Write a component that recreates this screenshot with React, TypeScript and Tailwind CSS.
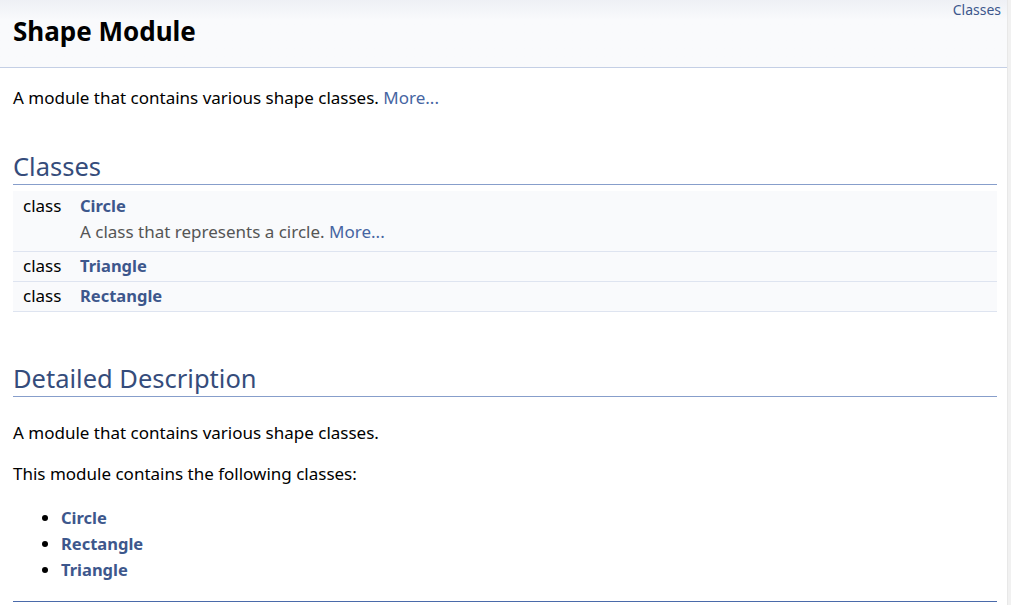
const font = { fontFamily: '"Noto Sans", "Open Sans", sans-serif' };

const members = [
  { name: 'Circle', brief: 'A class that represents a circle.' },
  { name: 'Triangle' },
  { name: 'Rectangle' },
];

const listed = ['Circle', 'Rectangle', 'Triangle'];

export default function App() {
  return (
    <div className="flex h-[605px] w-[1011px] overflow-hidden bg-white text-black" style={font}>
      <div className="flex min-w-0 flex-1 flex-col">
        {/* Title bar */}
        <div className="flex items-start justify-between border-b border-[#c4cfe5] bg-gradient-to-b from-[#eef0f5] to-[#f9fafc] to-[30%] pl-[13px] pr-[6px]">
          <h1 className="pb-[20px] pt-[15px] text-[26px] font-bold leading-[32px]">Shape Module</h1>
          <a className="pt-[1px] text-[14px] leading-[18px] text-[#3d578c]">Classes</a>
        </div>

        <div className="flex flex-col px-[13px] pr-[10px]">
          <p className="mt-[18px] text-[17px] leading-[24px]">
            A module that contains various shape classes. <a className="text-[#4665a2]">More...</a>
          </p>

          {/* Classes summary */}
          <h2 className="mt-[40px] border-b border-[#879ecb] pb-[2px] text-[25.5px] leading-[32px] text-[#354c7b]">
            Classes
          </h2>
          <div className="mt-[6px] flex flex-col">
            {members.map((m) => (
              <div
                key={m.name}
                className={`flex border-b border-[#dee4f0] bg-[#f9fafc] pl-[10px] text-[17px] leading-[22px] ${
                  m.brief ? 'pb-[8px] pt-[4px]' : 'pb-[4px] pt-[3px]'
                }`}
              >
                <div className="w-[57px] shrink-0">class</div>
                <div className="flex flex-col">
                  <a className="text-[16.5px] font-bold text-[#3d578c]">{m.name}</a>
                  {m.brief && (
                    <div className="mt-[4px] text-[#555555]">
                      {m.brief} <a className="text-[#4665a2]">More...</a>
                    </div>
                  )}
                </div>
              </div>
            ))}
          </div>

          {/* Detailed description */}
          <h2 className="mt-[50px] border-b border-[#879ecb] pb-[2px] text-[25.5px] leading-[32px] text-[#354c7b]">
            Detailed Description
          </h2>
          <p className="mt-[24px] text-[17px] leading-[24px]">A module that contains various shape classes.</p>
          <p className="mt-[17px] text-[17px] leading-[24px]">This module contains the following classes:</p>
          <ul className="mt-[19px] list-disc pl-[48px] text-[16.5px] leading-[26px]">
            {listed.map((n) => (
              <li key={n}>
                <a className="font-bold text-[#3d578c]">{n}</a>
              </li>
            ))}
          </ul>
          <div className="mt-[18px] border-t border-[#4a6aaa]" />
        </div>
      </div>
      <div className="w-[4px] shrink-0 border-l border-[#e8e8e8] bg-[#f1f1f1]" />
    </div>
  );
}
